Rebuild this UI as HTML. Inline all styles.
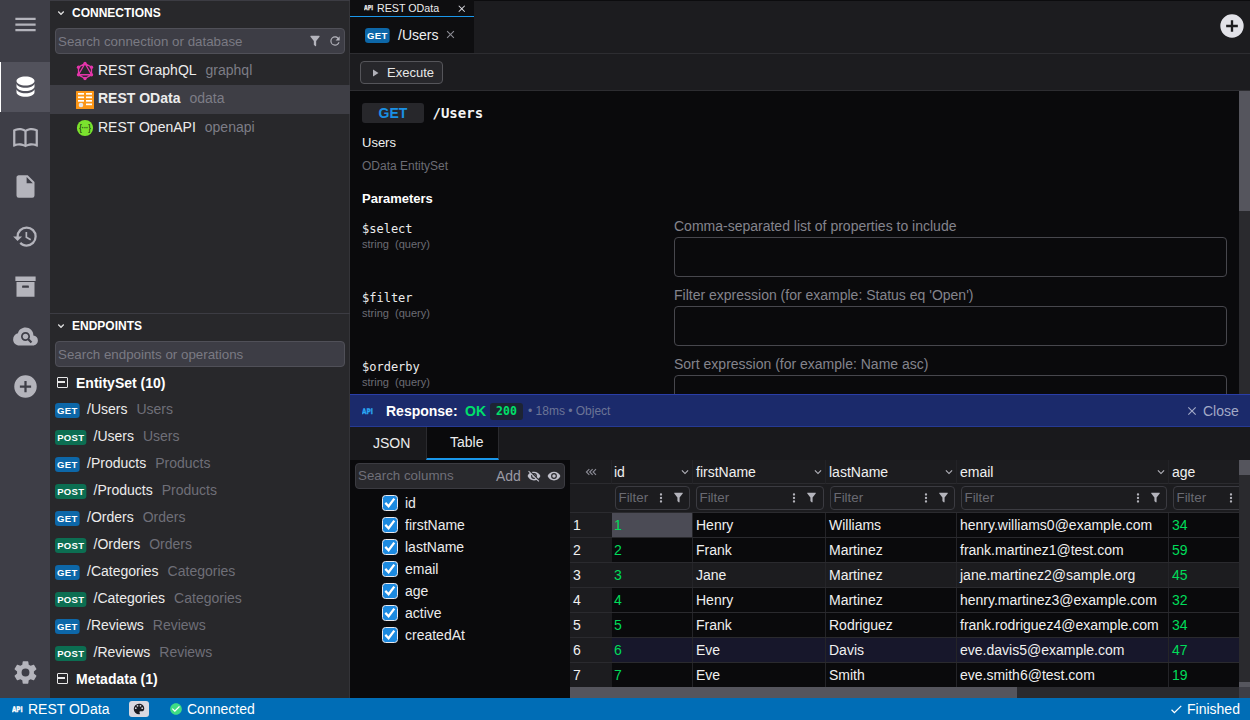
<!DOCTYPE html>
<html lang="en">
<head>
<meta charset="utf-8">
<title>REST OData</title>
<style>
*{box-sizing:border-box;margin:0;padding:0}
html,body{width:1250px;height:720px;overflow:hidden;background:#0a0a0c;color:#ececec;
  font-family:"Liberation Sans",Arial,sans-serif;font-size:14px}
.abs{position:absolute}
.mono{font-family:"DejaVu Sans Mono","Liberation Mono",monospace}
svg{display:block}
/* icon bar */
#iconbar{position:absolute;left:0;top:0;width:50px;height:698px;background:#3e3e47}
#iconbar .act{position:absolute;left:0;top:62px;width:50px;height:50px;background:#52525c;border-left:1.5px solid #fff}
#iconbar svg{position:absolute;left:11.5px;width:27px;height:27px;margin-top:.5px;fill:#b4b4bc}
/* side panel */
#side{position:absolute;left:50px;top:0;width:300px;height:698px;background:#28282b;border-right:1px solid #343438}
.shead{position:absolute;left:0;width:300px;height:25px;font-weight:bold;font-size:12px;color:#fff;line-height:25px;padding-left:22px;border-top:1px solid #3c3c43}
.shead svg{position:absolute;left:5px;top:6px;width:12px;height:12px;fill:#e6e6e6;stroke:#e6e6e6;stroke-width:.8}
.search{position:absolute;left:5px;width:290px;height:26px;background:#3d3d45;border:1px solid #505058;border-radius:4px;
  color:#7a7a83;font-size:13.33px;line-height:25px;padding-left:2px}
.search svg{position:absolute;top:4.5px;width:14px;height:14px;fill:#b4b4bc}
.crow{position:absolute;left:0;width:300px;height:28px;line-height:28px;font-size:14px;color:#ececec;padding-left:48px;white-space:nowrap}
.crow .sub{color:#7d7d86;margin-left:9px}
.crow svg{position:absolute;left:26px;top:5px;width:18px;height:18px}
.erow{position:absolute;left:0;width:300px;height:27px;line-height:29px;font-size:14px;color:#ececec;white-space:nowrap}
.erow .sub{color:#6f6f78;margin-left:9px}
.bdg{position:absolute;left:5px;top:8px;height:15px;border-radius:3px;color:#fff;font:bold 8.5px/17px "Liberation Sans",sans-serif;letter-spacing:.3px;padding-left:.3px;transform:scaleX(1.12);transform-origin:0 0;text-align:center;overflow:hidden}
.bdg.get{width:21.8px;background:#0d67a8}
.bdg.post{width:27.9px;background:#0c6e52}
.erow.g{padding-left:37px}
.erow.p{padding-left:43.5px}
.grp{position:absolute;left:0;width:300px;height:27px;line-height:29px;font-weight:bold;font-size:14px;color:#fff;padding-left:26px}
.grp i{position:absolute;left:6.5px;top:8px;width:11px;height:11px;border:1.5px solid #e8e8e8;border-radius:1px}
.grp i:after{content:"";position:absolute;left:.5px;top:3.2px;width:7px;height:1.6px;background:#e8e8e8}
/* status */
#status{position:absolute;left:0;top:698px;width:1250px;height:22px;background:#006db6;color:#fff;font-size:14px;line-height:22px}
/* main */
#main{position:absolute;left:350px;top:0;width:900px;height:698px;background:#0a0a0c;overflow:hidden}
</style>
</head>
<body>
<div id="iconbar">
  <div class="act"></div>
  <svg style="top:10px" viewBox="0 0 24 24"><path d="M3,6H21V8H3V6M3,11H21V13H3V11M3,16H21V18H3V16Z"/></svg>
  <svg style="top:72px;fill:#fff" viewBox="0 0 24 24"><path d="M12,3C7.58,3 4,4.79 4,7C4,9.21 7.58,11 12,11C16.42,11 20,9.21 20,7C20,4.79 16.42,3 12,3M4,9V12C4,14.21 7.58,16 12,16C16.42,16 20,14.21 20,12V9C20,11.21 16.42,13 12,13C7.58,13 4,11.21 4,9M4,14V17C4,19.21 7.58,21 12,21C16.42,21 20,19.21 20,17V14C20,16.21 16.42,18 12,18C7.58,18 4,16.21 4,14Z"/></svg>
  <svg style="top:122px" viewBox="0 0 24 24"><path fill-rule="evenodd" d="M12,21.5C10.65,20.65 8.2,20 6.5,20C4.85,20 3.15,20.3 1.75,21.05C1.65,21.1 1.6,21.1 1.5,21.1C1.25,21.1 1,20.85 1,20.6V6C1.6,5.55 2.25,5.25 3,5C4.11,4.65 5.33,4.5 6.5,4.5C8.45,4.5 10.55,4.9 12,6C13.45,4.9 15.55,4.5 17.5,4.5C18.67,4.5 19.89,4.65 21,5C21.75,5.25 22.4,5.55 23,6V20.6C23,20.85 22.75,21.1 22.5,21.1C22.4,21.1 22.35,21.1 22.25,21.05C20.85,20.3 19.15,20 17.5,20C15.8,20 13.35,20.65 12,21.5ZM13,19V7.5C14.3,6.9 15.9,6.5 17.5,6.5C18.7,6.5 19.9,6.65 21,7V18.5C19.9,18.15 18.7,18 17.5,18C15.9,18 14.3,18.4 13,19ZM11,19V7.5C9.7,6.9 8.1,6.5 6.5,6.5C5.3,6.5 4.1,6.65 3,7V18.5C4.1,18.15 5.3,18 6.5,18C8.1,18 9.7,18.4 11,19Z"/></svg>
  <svg style="top:172px" viewBox="0 0 24 24"><path d="M13,9V3.5L18.5,9M6,2C4.89,2 4,2.89 4,4V20A2,2 0 0,0 6,22H18A2,2 0 0,0 20,20V8L14,2H6Z"/></svg>
  <svg style="top:222px" viewBox="0 0 24 24"><path d="M13.5,8H12V13L16.28,15.54L17,14.33L13.5,12.25V8M13,3A9,9 0 0,0 4,12H1L4.96,16.03L9,12H6A7,7 0 0,1 13,5A7,7 0 0,1 20,12A7,7 0 0,1 13,19C11.07,19 9.32,18.21 8.06,16.94L6.64,18.36C8.27,20 10.5,21 13,21A9,9 0 0,0 22,12A9,9 0 0,0 13,3"/></svg>
  <svg style="top:272px" viewBox="0 0 24 24"><path d="M3,3H21V7H3V3M4,8H20V21H4V8M9.5,11A0.5,0.5 0 0,0 9,11.5V13H15V11.5A0.5,0.5 0 0,0 14.5,11H9.5Z"/></svg>
  <svg style="top:322px" viewBox="0 0 24 24"><path d="M21.86 12.5C21.1 11.63 20.15 11.13 19 11C19 9.05 18.32 7.4 16.96 6.04C15.6 4.68 13.95 4 12 4C10.42 4 9 4.47 7.75 5.43S5.67 7.62 5.25 9.15C4 9.43 2.96 10.08 2.17 11.1S1 13.28 1 14.58C1 16.09 1.54 17.38 2.61 18.43C3.69 19.5 5 20 6.5 20H18.5C19.75 20 20.81 19.56 21.69 18.69C22.56 17.81 23 16.75 23 15.5C23 14.35 22.62 13.35 21.86 12.5M16.57 18L14 15.43C13.43 15.79 12.74 16 12 16C9.79 16 8 14.21 8 12S9.79 8 12 8 16 9.79 16 12C16 12.74 15.79 13.43 15.43 14L18 16.57L16.57 18M14.5 12C14.5 13.38 13.38 14.5 12 14.5S9.5 13.38 9.5 12 10.62 9.5 12 9.5 14.5 10.62 14.5 12Z"/></svg>
  <svg style="top:372px" viewBox="0 0 24 24"><path d="M17,13H13V17H11V13H7V11H11V7H13V11H17M12,2A10,10 0 0,0 2,12A10,10 0 0,0 12,22A10,10 0 0,0 22,12A10,10 0 0,0 12,2Z"/></svg>
  <svg style="top:658px" viewBox="0 0 24 24"><path d="M12,15.5A3.5,3.5 0 0,1 8.5,12A3.5,3.5 0 0,1 12,8.5A3.5,3.5 0 0,1 15.5,12A3.5,3.5 0 0,1 12,15.5M19.43,12.97C19.47,12.65 19.5,12.33 19.5,12C19.5,11.67 19.47,11.34 19.43,11L21.54,9.37C21.73,9.22 21.78,8.95 21.66,8.73L19.66,5.27C19.54,5.05 19.27,4.96 19.05,5.05L16.56,6.05C16.04,5.66 15.5,5.32 14.87,5.07L14.5,2.42C14.46,2.18 14.25,2 14,2H10C9.75,2 9.54,2.18 9.5,2.42L9.13,5.07C8.5,5.32 7.96,5.66 7.44,6.05L4.95,5.05C4.73,4.96 4.46,5.05 4.34,5.27L2.34,8.73C2.21,8.95 2.27,9.22 2.46,9.37L4.57,11C4.53,11.34 4.5,11.67 4.5,12C4.5,12.33 4.53,12.65 4.57,12.97L2.46,14.63C2.27,14.78 2.21,15.05 2.34,15.27L4.34,18.73C4.46,18.95 4.73,19.03 4.95,18.95L7.44,17.94C7.96,18.34 8.5,18.68 9.13,18.93L9.5,21.58C9.54,21.82 9.75,22 10,22H14C14.25,22 14.46,21.82 14.5,21.58L14.87,18.93C15.5,18.67 16.04,18.34 16.56,17.94L19.05,18.95C19.27,19.03 19.54,18.95 19.66,18.73L21.66,15.27C21.78,15.05 21.73,14.78 21.54,14.63L19.43,12.97Z"/></svg>
</div>
<div id="side">
  <div class="shead" style="top:0"><svg viewBox="0 0 24 24"><path d="M7.41,8.58L12,13.17L16.59,8.58L18,10L12,16L6,10L7.41,8.58Z"/></svg>CONNECTIONS</div>
  <div class="search" style="top:28px">Search connection or database
    <svg style="left:251.5px" viewBox="0 0 24 24"><path d="M14,12V19.88C14.04,20.18 13.94,20.5 13.71,20.71C13.32,21.1 12.69,21.1 12.3,20.71L10.29,18.7C10.06,18.47 9.96,18.16 10,17.87V12H9.97L4.21,4.62C3.87,4.19 3.95,3.56 4.38,3.22C4.57,3.08 4.78,3 5,3V3H19V3C19.22,3 19.43,3.08 19.62,3.22C20.05,3.56 20.13,4.19 19.79,4.62L14.03,12H14Z"/></svg>
    <svg style="left:271.5px" viewBox="0 0 24 24"><path d="M17.65,6.35C16.2,4.9 14.21,4 12,4A8,8 0 0,0 4,12A8,8 0 0,0 12,20C15.73,20 18.84,17.45 19.73,14H17.65C16.83,16.33 14.61,18 12,18A6,6 0 0,1 6,12A6,6 0 0,1 12,6C13.66,6 15.14,6.69 16.22,7.78L13,11H20V4L17.65,6.35Z"/></svg>
  </div>
  <div class="crow" style="top:56px">
    <svg viewBox="0 0 24 24" style="left:24.8px;top:5px;width:20px;height:20px" fill="none" stroke="#e535ab" stroke-width="1.6"><path d="M12 3 L19.8 7.5 V16.5 L12 21 L4.2 16.5 V7.5 Z M12 3 L4.2 16.5 H19.8 Z"/><g fill="#e535ab" stroke="none"><circle cx="12" cy="3" r="2"/><circle cx="19.8" cy="7.5" r="2"/><circle cx="19.8" cy="16.5" r="2"/><circle cx="12" cy="21" r="2"/><circle cx="4.2" cy="16.5" r="2"/><circle cx="4.2" cy="7.5" r="2"/></g></svg>
    REST GraphQL<span class="sub">graphql</span></div>
  <div class="crow" style="top:85px;height:29px;background:#3e3e45;font-weight:bold;line-height:27px">
    <svg viewBox="0 0 18 18" style="top:6px"><rect width="18" height="18" rx="0.5" fill="#fb9617"/><g fill="#fff"><rect x="2" y="2" width="6" height="1.7"/><rect x="10" y="2" width="6" height="1.7"/><rect x="2" y="5.5" width="6" height="1.7"/><rect x="10" y="5.5" width="6" height="1.7"/><rect x="2" y="9" width="6" height="1.7"/><rect x="10" y="9" width="6" height="1.7"/><rect x="10" y="12.5" width="6" height="1.7"/></g><circle cx="5" cy="14" r="2.3" fill="#e6e6ea"/></svg>
    REST OData<span class="sub" style="font-weight:normal">odata</span></div>
  <div class="crow" style="top:113px;height:29px;line-height:29px">
    <svg viewBox="0 0 18 18" style="top:6px"><circle cx="9" cy="9" r="8.1" fill="#7be22e"/><text x="9" y="12" text-anchor="middle" font-family="Liberation Sans" font-weight="bold" font-size="9.5" textLength="11.5" lengthAdjust="spacingAndGlyphs" fill="#1c4010">{···}</text></svg>
    REST OpenAPI<span class="sub">openapi</span></div>
  <div class="shead" style="top:313px"><svg viewBox="0 0 24 24"><path d="M7.41,8.58L12,13.17L16.59,8.58L18,10L12,16L6,10L7.41,8.58Z"/></svg>ENDPOINTS</div>
  <div class="search" style="top:341px;line-height:26px">Search endpoints or operations</div>
  <div class="grp" style="top:369px"><i></i>EntitySet (10)</div>
  <div class="erow g" style="top:395px"><span class="bdg get">GET</span>/Users<span class="sub">Users</span></div>
  <div class="erow p" style="top:422px"><span class="bdg post">POST</span>/Users<span class="sub">Users</span></div>
  <div class="erow g" style="top:449px"><span class="bdg get">GET</span>/Products<span class="sub">Products</span></div>
  <div class="erow p" style="top:476px"><span class="bdg post">POST</span>/Products<span class="sub">Products</span></div>
  <div class="erow g" style="top:503px"><span class="bdg get">GET</span>/Orders<span class="sub">Orders</span></div>
  <div class="erow p" style="top:530px"><span class="bdg post">POST</span>/Orders<span class="sub">Orders</span></div>
  <div class="erow g" style="top:557px"><span class="bdg get">GET</span>/Categories<span class="sub">Categories</span></div>
  <div class="erow p" style="top:584px"><span class="bdg post">POST</span>/Categories<span class="sub">Categories</span></div>
  <div class="erow g" style="top:611px"><span class="bdg get">GET</span>/Reviews<span class="sub">Reviews</span></div>
  <div class="erow p" style="top:638px"><span class="bdg post">POST</span>/Reviews<span class="sub">Reviews</span></div>
  <div class="grp" style="top:665px"><i></i>Metadata (1)</div>
</div>
<style>
#tab1{position:absolute;left:0;top:0;width:900px;height:17px;background:#1c1c1f}
#tab1 .t{position:absolute;left:0;top:0;width:124px;height:17px;background:#0e0e10;border-bottom:1.5px solid #1a97ea;font-size:10.7px;line-height:15px;color:#ececec}
#tab2{position:absolute;left:0;top:17px;width:900px;height:36px;background:#1c1c1f}
#tab2 .t{position:absolute;left:0;top:0;width:124px;height:36px;background:#0e0e10}
.hl{position:absolute;left:0;width:900px;height:1px;background:#2d2d31}
#tool{position:absolute;left:0;top:54px;width:900px;height:36px;background:#1c1c1f}
#exec{position:absolute;left:10px;top:7px;width:83px;height:23px;background:#27272b;border:1px solid #55555a;border-radius:4px;font-size:13px;line-height:21px;color:#e6e6e6;padding-left:26px}
#content{position:absolute;left:0;top:91px;width:889px;height:303px;background:#0a0a0c;overflow:hidden}
.pname{position:absolute;left:12px;font:12px/14px "DejaVu Sans Mono",monospace;color:#ececec}
.ptype{position:absolute;left:12px;font-size:11px;line-height:13px;color:#6c6c74;white-space:pre}
.pdesc{position:absolute;left:324px;font-size:14px;line-height:16px;color:#84848c;white-space:nowrap}
.pbox{position:absolute;left:324px;width:553px;height:40px;border:1px solid #47474d;border-radius:4px}
.vsb{position:absolute;background:#2a2a2e}
.vsb i{position:absolute;left:0;top:0;width:100%;background:#55555d}
#resp{position:absolute;left:0;top:394px;width:900px;height:33px;background:#1b2a6b;border-top:1px solid #2a3ea8;border-bottom:1px solid #263a94}
#rtabs{position:absolute;left:0;top:427px;width:900px;height:33px;background:#19191c}
#rtabs .t{position:absolute;top:0;height:33px;font-size:14px;color:#ececec;text-align:center}
#cols{position:absolute;left:0;top:460px;width:220px;height:238px;background:#0a0a0c}
#cols .sb{position:absolute;left:5px;top:3px;width:210px;height:26px;background:#29292d;border:1px solid #3b3b41;border-radius:4px;font-size:13.33px;line-height:24px;color:#6f6f78;padding-left:2px}
.ck{position:absolute;left:32px;width:16px;height:16px;border-radius:3.5px;background:#1c8ae0;border:1px solid #e8e8ee}
.ck svg{position:absolute;left:-1px;top:-1px;width:16px;height:16px;fill:none;stroke:#fff;stroke-width:2.3}
.cl{position:absolute;left:55px;font-size:14px;line-height:22px;color:#ececec}
#grid{position:absolute;left:220px;top:460px;width:669px;height:228px;background:#0a0a0c;overflow:hidden}
.gh{position:absolute;top:0;height:24px;background:#1c1c1f;font-size:14px;line-height:24px;color:#f0f0f0;padding-left:3px;border-right:1px solid #232327;border-bottom:1px solid #2b2b2f}
.gh svg{position:absolute;right:0;top:5px;width:14px;height:14px;fill:#b0b0b8}
.gf{position:absolute;top:24px;height:29px;background:#1c1c1f;border-bottom:1px solid #2b2b2f}
.fi{position:absolute;top:2px;height:24px;background:#1c1c1f;border:1px solid #3b3b41;border-radius:4px;font-size:13.33px;line-height:22px;color:#6a6a72;padding-left:2.5px}
.fi svg{position:absolute;fill:#b4b4bc}
.gr{position:absolute;left:0;width:760px;height:25px;border-bottom:1px solid #2a2a2e;font-size:14px;line-height:24px;color:#f0f0f0;white-space:nowrap}
.gr span{position:absolute;top:0;height:24px;padding-left:3px;border-right:1px solid #242428}
.gr .n{left:0;width:42px;background:#1c1c1f;border-right:none}
.gr .c1{left:42px;width:81px;color:#00dc5a;padding-left:2px}
.gr .c2{left:123px;width:133px}
.gr .c3{left:256px;width:131px}
.gr .c4{left:387px;width:212px}
.gr .c5{left:599px;width:100px;color:#00dc5a;border-right:none}
</style>
<div id="main">
  <div id="tab1"><div class="abs" style="left:124px;top:0;width:776px;height:1px;background:#0c0c0e"></div><div class="t">
    <svg class="abs" style="left:14px;top:3.4px" width="12" height="8" viewBox="0 0 12 8"><text x="0" y="7" font-family="DejaVu Sans" font-weight="bold" font-size="6.8" textLength="9" lengthAdjust="spacingAndGlyphs" fill="#e6e6e6" stroke="#e6e6e6" stroke-width=".3">API</text></svg>
    <span class="abs" style="left:27px;top:1px">REST OData</span>
    <svg class="abs" style="left:105.7px;top:2.5px;fill:#d8d8de" width="11.5" height="11.5" viewBox="0 0 24 24"><path d="M19,6.41L17.59,5L12,10.59L6.41,5L5,6.41L10.59,12L5,17.59L6.41,19L12,13.41L17.59,19L19,17.59L13.41,12L19,6.41Z"/></svg>
  </div></div>
  <div id="tab2"><div class="t">
    <span class="bdg get" style="left:15px;top:11px;height:15px;line-height:16px">GET</span>
    <span class="abs" style="left:48px;top:10px;font-size:14px;line-height:16px;color:#f0f0f0">/Users</span>
    <svg class="abs" style="left:94px;top:11px;fill:#8c8c94" width="13" height="13" viewBox="0 0 24 24"><path d="M19,6.41L17.59,5L12,10.59L6.41,5L5,6.41L10.59,12L5,17.59L6.41,19L12,13.41L17.59,19L19,17.59L13.41,12L19,6.41Z"/></svg>
  </div>
    <svg class="abs" style="left:868px;top:-5px;fill:#e2e2e8" width="28" height="28" viewBox="0 0 24 24"><path d="M17,13H13V17H11V13H7V11H11V7H13V11H17M12,2A10,10 0 0,0 2,12A10,10 0 0,0 12,22A10,10 0 0,0 22,12A10,10 0 0,0 12,2Z"/></svg>
  </div>
  <div class="hl" style="top:53px"></div>
  <div id="tool"><div id="exec"><svg class="abs" style="left:8px;top:4.5px;fill:#b0b0b8" width="12" height="12" viewBox="0 0 24 24"><path d="M8,5.14V19.14L19,12.14L8,5.14Z"/></svg>Execute</div></div>
  <div class="hl" style="top:90px"></div>
  <div id="content">
    <div class="abs" style="left:12px;top:12px;width:62px;height:20px;background:#27272b;border-radius:3px;color:#1a90e4;font-weight:bold;font-size:14px;line-height:20px;text-align:center">GET</div>
    <div class="abs mono" style="left:82.5px;top:13px;font-weight:bold;font-size:14px;line-height:18px;color:#f4f4f4">/Users</div>
    <div class="abs" style="left:12px;top:44px;font-size:13px;line-height:15px;color:#f0f0f0">Users</div>
    <div class="abs" style="left:12px;top:68px;font-size:12px;line-height:14px;color:#6c6c74">OData EntitySet</div>
    <div class="abs" style="left:12px;top:100px;font-size:13px;line-height:15px;font-weight:bold;color:#fff">Parameters</div>
    <div class="pname" style="top:131px">$select</div><div class="ptype" style="top:147px">string  (query)</div>
    <div class="pdesc" style="top:127px">Comma-separated list of properties to include</div><div class="pbox" style="top:146px"></div>
    <div class="pname" style="top:200px">$filter</div><div class="ptype" style="top:216px">string  (query)</div>
    <div class="pdesc" style="top:196px">Filter expression (for example: Status eq 'Open')</div><div class="pbox" style="top:215px"></div>
    <div class="pname" style="top:269px">$orderby</div><div class="ptype" style="top:285px">string  (query)</div>
    <div class="pdesc" style="top:265px">Sort expression (for example: Name asc)</div><div class="pbox" style="top:284px"></div>
  </div>
  <div class="vsb" style="left:889px;top:91px;width:11px;height:303px"><i style="height:120px"></i></div>
  <div id="resp">
    <svg class="abs" style="left:11.5px;top:11.8px" width="12" height="8" viewBox="0 0 12 8"><text x="0" y="7" font-family="DejaVu Sans" font-weight="bold" font-size="7.6" textLength="10.8" lengthAdjust="spacingAndGlyphs" fill="#2aa8f5" stroke="#2aa8f5" stroke-width=".35">API</text></svg>
    <span class="abs" style="left:36px;top:7px;font-weight:bold;font-size:14px;line-height:18px;color:#fff">Response:</span>
    <span class="abs" style="left:115px;top:7px;font-weight:bold;font-size:14px;line-height:18px;color:#00e06a">OK</span>
    <span class="abs mono" style="left:140px;top:8px;width:33px;height:17px;background:#1d2433;border-radius:3px;font-weight:bold;font-size:11.5px;line-height:17px;color:#00e06a;text-align:center">200</span>
    <span class="abs" style="left:178px;top:9px;font-size:12px;line-height:14px;color:#6b7496">• 18ms • Object</span>
    <svg class="abs" style="left:835px;top:9px;fill:#a2a9c6" width="14" height="14" viewBox="0 0 24 24"><path d="M19,6.41L17.59,5L12,10.59L6.41,5L5,6.41L10.59,12L5,17.59L6.41,19L12,13.41L17.59,19L19,17.59L13.41,12L19,6.41Z"/></svg>
    <span class="abs" style="left:853px;top:7px;font-size:14px;line-height:18px;color:#a2a9c6">Close</span>
  </div>
  <div id="rtabs">
    <div class="t" style="left:0;width:76px;line-height:33px;text-align:left;padding-left:23px">JSON</div>
    <div class="t" style="left:76px;width:73px;background:#0a0a0c;border-bottom:2px solid #1a97ea;border-left:1px solid #2a2a2e;border-right:1px solid #2a2a2e;line-height:30px;text-align:left;padding-left:23px">Table</div>
  </div>
  <div id="cols">
    <div class="sb">Search columns
      <span class="abs" style="left:140px;top:0;font-size:14px;color:#9a9aa4">Add</span>
      <svg class="abs" style="left:171.3px;top:4.5px;fill:#c0c0ca" width="14" height="14" viewBox="0 0 24 24"><path d="M11.83,9L15,12.16C15,12.11 15,12.05 15,12A3,3 0 0,0 12,9C11.94,9 11.89,9 11.83,9M7.53,9.8L9.08,11.35C9.03,11.56 9,11.77 9,12A3,3 0 0,0 12,15C12.22,15 12.44,14.97 12.65,14.92L14.2,16.47C13.53,16.8 12.79,17 12,17A5,5 0 0,1 7,12C7,11.21 7.2,10.47 7.53,9.8M2,4.27L4.28,6.55L4.73,7C3.08,8.3 1.78,10 1,12C2.73,16.39 7,19.5 12,19.5C13.55,19.5 15.03,19.2 16.38,18.66L16.81,19.08L19.73,22L21,20.73L3.27,3M12,7A5,5 0 0,1 17,12C17,12.64 16.87,13.26 16.64,13.82L19.57,16.75C21.07,15.5 22.27,13.86 23,12C21.27,7.61 17,4.5 12,4.5C10.6,4.5 9.26,4.75 8,5.2L10.17,7.35C10.74,7.13 11.35,7 12,7Z"/></svg>
      <svg class="abs" style="left:191px;top:4.7px;fill:#c0c0ca" width="14" height="14" viewBox="0 0 24 24"><path d="M12,9A3,3 0 0,0 9,12A3,3 0 0,0 12,15A3,3 0 0,0 15,12A3,3 0 0,0 12,9M12,17A5,5 0 0,1 7,12A5,5 0 0,1 12,7A5,5 0 0,1 17,12A5,5 0 0,1 12,17M12,4.5C7,4.5 2.73,7.61 1,12C2.73,16.39 7,19.5 12,19.5C17,19.5 21.27,16.39 23,12C21.27,7.61 17,4.5 12,4.5Z"/></svg>
    </div>
    <div class="ck" style="top:35px"><svg viewBox="0 0 16 16"><path d="M3.3 7.9 L6.6 11.2 L12.3 3.6"/></svg></div><div class="cl" style="top:32px">id</div>
<div class="ck" style="top:57px"><svg viewBox="0 0 16 16"><path d="M3.3 7.9 L6.6 11.2 L12.3 3.6"/></svg></div><div class="cl" style="top:54px">firstName</div>
<div class="ck" style="top:79px"><svg viewBox="0 0 16 16"><path d="M3.3 7.9 L6.6 11.2 L12.3 3.6"/></svg></div><div class="cl" style="top:76px">lastName</div>
<div class="ck" style="top:101px"><svg viewBox="0 0 16 16"><path d="M3.3 7.9 L6.6 11.2 L12.3 3.6"/></svg></div><div class="cl" style="top:98px">email</div>
<div class="ck" style="top:123px"><svg viewBox="0 0 16 16"><path d="M3.3 7.9 L6.6 11.2 L12.3 3.6"/></svg></div><div class="cl" style="top:120px">age</div>
<div class="ck" style="top:145px"><svg viewBox="0 0 16 16"><path d="M3.3 7.9 L6.6 11.2 L12.3 3.6"/></svg></div><div class="cl" style="top:142px">active</div>
<div class="ck" style="top:167px"><svg viewBox="0 0 16 16"><path d="M3.3 7.9 L6.6 11.2 L12.3 3.6"/></svg></div><div class="cl" style="top:164px">createdAt</div>

  </div>
  <div id="grid">
    <div class="gh" style="left:0;width:42px"><svg style="left:15px;top:7px;right:auto;width:12px;height:10px;fill:none;stroke:#8a8a94;stroke-width:1.4" viewBox="0 0 14 12"><path d="M5 2.5 L1.5 6 L5 9.5 M9 2.5 L5.5 6 L9 9.5 M13 2.5 L9.5 6 L13 9.5"/></svg></div>
<div class="gf" style="left:0;width:42px"></div>
<div class="gh" style="left:42px;width:81px"><span style="margin-left:-1px">id</span><svg viewBox="0 0 24 24"><path d="M7.41,8.58L12,13.17L16.59,8.58L18,10L12,16L6,10L7.41,8.58Z"/></svg></div>
<div class="gf" style="left:42px;width:81px"><div class="fi" style="left:3px;width:75px">Filter<svg style="left:38px;top:4px" width="14" height="14" viewBox="0 0 24 24"><path d="M12,16A2,2 0 0,1 14,18A2,2 0 0,1 12,20A2,2 0 0,1 10,18A2,2 0 0,1 12,16M12,10A2,2 0 0,1 14,12A2,2 0 0,1 12,14A2,2 0 0,1 10,12A2,2 0 0,1 12,10M12,4A2,2 0 0,1 14,6A2,2 0 0,1 12,8A2,2 0 0,1 10,6A2,2 0 0,1 12,4Z"/></svg><svg style="left:56px;top:4px" width="13" height="13" viewBox="0 0 24 24"><path d="M14,12V19.88C14.04,20.18 13.94,20.5 13.71,20.71C13.32,21.1 12.69,21.1 12.3,20.71L10.29,18.7C10.06,18.47 9.96,18.16 10,17.87V12H9.97L4.21,4.62C3.87,4.19 3.95,3.56 4.38,3.22C4.57,3.08 4.78,3 5,3V3H19V3C19.22,3 19.43,3.08 19.62,3.22C20.05,3.56 20.13,4.19 19.79,4.62L14.03,12H14Z"/></svg></div></div>
<div class="gh" style="left:123px;width:133px">firstName<svg viewBox="0 0 24 24"><path d="M7.41,8.58L12,13.17L16.59,8.58L18,10L12,16L6,10L7.41,8.58Z"/></svg></div>
<div class="gf" style="left:123px;width:133px"><div class="fi" style="left:3px;width:128px">Filter<svg style="left:90px;top:4px" width="14" height="14" viewBox="0 0 24 24"><path d="M12,16A2,2 0 0,1 14,18A2,2 0 0,1 12,20A2,2 0 0,1 10,18A2,2 0 0,1 12,16M12,10A2,2 0 0,1 14,12A2,2 0 0,1 12,14A2,2 0 0,1 10,12A2,2 0 0,1 12,10M12,4A2,2 0 0,1 14,6A2,2 0 0,1 12,8A2,2 0 0,1 10,6A2,2 0 0,1 12,4Z"/></svg><svg style="left:108px;top:4px" width="13" height="13" viewBox="0 0 24 24"><path d="M14,12V19.88C14.04,20.18 13.94,20.5 13.71,20.71C13.32,21.1 12.69,21.1 12.3,20.71L10.29,18.7C10.06,18.47 9.96,18.16 10,17.87V12H9.97L4.21,4.62C3.87,4.19 3.95,3.56 4.38,3.22C4.57,3.08 4.78,3 5,3V3H19V3C19.22,3 19.43,3.08 19.62,3.22C20.05,3.56 20.13,4.19 19.79,4.62L14.03,12H14Z"/></svg></div></div>
<div class="gh" style="left:256px;width:131px">lastName<svg viewBox="0 0 24 24"><path d="M7.41,8.58L12,13.17L16.59,8.58L18,10L12,16L6,10L7.41,8.58Z"/></svg></div>
<div class="gf" style="left:256px;width:131px"><div class="fi" style="left:4px;width:125px">Filter<svg style="left:88px;top:4px" width="14" height="14" viewBox="0 0 24 24"><path d="M12,16A2,2 0 0,1 14,18A2,2 0 0,1 12,20A2,2 0 0,1 10,18A2,2 0 0,1 12,16M12,10A2,2 0 0,1 14,12A2,2 0 0,1 12,14A2,2 0 0,1 10,12A2,2 0 0,1 12,10M12,4A2,2 0 0,1 14,6A2,2 0 0,1 12,8A2,2 0 0,1 10,6A2,2 0 0,1 12,4Z"/></svg><svg style="left:106px;top:4px" width="13" height="13" viewBox="0 0 24 24"><path d="M14,12V19.88C14.04,20.18 13.94,20.5 13.71,20.71C13.32,21.1 12.69,21.1 12.3,20.71L10.29,18.7C10.06,18.47 9.96,18.16 10,17.87V12H9.97L4.21,4.62C3.87,4.19 3.95,3.56 4.38,3.22C4.57,3.08 4.78,3 5,3V3H19V3C19.22,3 19.43,3.08 19.62,3.22C20.05,3.56 20.13,4.19 19.79,4.62L14.03,12H14Z"/></svg></div></div>
<div class="gh" style="left:387px;width:212px">email<svg viewBox="0 0 24 24"><path d="M7.41,8.58L12,13.17L16.59,8.58L18,10L12,16L6,10L7.41,8.58Z"/></svg></div>
<div class="gf" style="left:387px;width:212px"><div class="fi" style="left:4px;width:206px">Filter<svg style="left:169px;top:4px" width="14" height="14" viewBox="0 0 24 24"><path d="M12,16A2,2 0 0,1 14,18A2,2 0 0,1 12,20A2,2 0 0,1 10,18A2,2 0 0,1 12,16M12,10A2,2 0 0,1 14,12A2,2 0 0,1 12,14A2,2 0 0,1 10,12A2,2 0 0,1 12,10M12,4A2,2 0 0,1 14,6A2,2 0 0,1 12,8A2,2 0 0,1 10,6A2,2 0 0,1 12,4Z"/></svg><svg style="left:187px;top:4px" width="13" height="13" viewBox="0 0 24 24"><path d="M14,12V19.88C14.04,20.18 13.94,20.5 13.71,20.71C13.32,21.1 12.69,21.1 12.3,20.71L10.29,18.7C10.06,18.47 9.96,18.16 10,17.87V12H9.97L4.21,4.62C3.87,4.19 3.95,3.56 4.38,3.22C4.57,3.08 4.78,3 5,3V3H19V3C19.22,3 19.43,3.08 19.62,3.22C20.05,3.56 20.13,4.19 19.79,4.62L14.03,12H14Z"/></svg></div></div>
<div class="gh" style="left:599px;width:93px">age</div>
<div class="gf" style="left:599px;width:93px"><div class="fi" style="left:4px;width:87px">Filter<svg style="left:50px;top:4px" width="14" height="14" viewBox="0 0 24 24"><path d="M12,16A2,2 0 0,1 14,18A2,2 0 0,1 12,20A2,2 0 0,1 10,18A2,2 0 0,1 12,16M12,10A2,2 0 0,1 14,12A2,2 0 0,1 12,14A2,2 0 0,1 10,12A2,2 0 0,1 12,10M12,4A2,2 0 0,1 14,6A2,2 0 0,1 12,8A2,2 0 0,1 10,6A2,2 0 0,1 12,4Z"/></svg><svg style="left:68px;top:4px" width="13" height="13" viewBox="0 0 24 24"><path d="M14,12V19.88C14.04,20.18 13.94,20.5 13.71,20.71C13.32,21.1 12.69,21.1 12.3,20.71L10.29,18.7C10.06,18.47 9.96,18.16 10,17.87V12H9.97L4.21,4.62C3.87,4.19 3.95,3.56 4.38,3.22C4.57,3.08 4.78,3 5,3V3H19V3C19.22,3 19.43,3.08 19.62,3.22C20.05,3.56 20.13,4.19 19.79,4.62L14.03,12H14Z"/></svg></div></div>
<div class="gr" style="top:53px;"><span class="n">1</span><span class="c1" style="background:#4b4b55">1</span><span class="c2">Henry</span><span class="c3">Williams</span><span class="c4">henry.williams0@example.com</span><span class="c5">34</span></div>
<div class="gr" style="top:78px;"><span class="n">2</span><span class="c1">2</span><span class="c2">Frank</span><span class="c3">Martinez</span><span class="c4">frank.martinez1@test.com</span><span class="c5">59</span></div>
<div class="gr" style="top:103px;background:#1c1c1f;"><span class="n">3</span><span class="c1">3</span><span class="c2">Jane</span><span class="c3">Martinez</span><span class="c4">jane.martinez2@sample.org</span><span class="c5">45</span></div>
<div class="gr" style="top:128px;"><span class="n">4</span><span class="c1">4</span><span class="c2">Henry</span><span class="c3">Martinez</span><span class="c4">henry.martinez3@example.com</span><span class="c5">32</span></div>
<div class="gr" style="top:153px;"><span class="n">5</span><span class="c1">5</span><span class="c2">Frank</span><span class="c3">Rodriguez</span><span class="c4">frank.rodriguez4@example.com</span><span class="c5">34</span></div>
<div class="gr" style="top:178px;background:#17172b;"><span class="n">6</span><span class="c1">6</span><span class="c2">Eve</span><span class="c3">Davis</span><span class="c4">eve.davis5@example.com</span><span class="c5">47</span></div>
<div class="gr" style="top:203px;"><span class="n">7</span><span class="c1">7</span><span class="c2">Eve</span><span class="c3">Smith</span><span class="c4">eve.smith6@test.com</span><span class="c5">19</span></div>

  </div>
  <div class="vsb" style="left:889px;top:460px;width:11px;height:228px"><i style="height:15px"></i><i style="top:222px;height:5px;background:#56565e"></i></div>
  <div class="vsb" style="left:220px;top:687px;width:669px;height:11px"><i style="height:11px;width:447px"></i></div>
  <div class="vsb" style="left:889px;top:687px;width:11px;height:11px;background:#3e3e46"></div>
</div>
<div id="status">
  <svg class="abs" style="left:11.8px;top:6.8px" width="12" height="8" viewBox="0 0 12 8"><text x="0" y="7" font-family="DejaVu Sans" font-weight="bold" font-size="7.8" textLength="10.6" lengthAdjust="spacingAndGlyphs" fill="#fff" stroke="#fff" stroke-width=".35">API</text></svg>
  <span class="abs" style="left:28px;top:0">REST OData</span>
  <span class="abs" style="left:129px;top:3px;width:20px;height:16px;background:#d9d9e1;border-radius:3px"></span>
  <svg class="abs" style="left:132px;top:4px;fill:#1c1c22" width="14" height="14" viewBox="0 0 24 24"><path d="M17.5,12A1.5,1.5 0 0,1 16,10.5A1.5,1.5 0 0,1 17.5,9A1.5,1.5 0 0,1 19,10.5A1.5,1.5 0 0,1 17.5,12M14.5,8A1.5,1.5 0 0,1 13,6.5A1.5,1.5 0 0,1 14.5,5A1.5,1.5 0 0,1 16,6.5A1.5,1.5 0 0,1 14.5,8M9.5,8A1.5,1.5 0 0,1 8,6.5A1.5,1.5 0 0,1 9.5,5A1.5,1.5 0 0,1 11,6.5A1.5,1.5 0 0,1 9.5,8M6.5,12A1.5,1.5 0 0,1 5,10.5A1.5,1.5 0 0,1 6.5,9A1.5,1.5 0 0,1 8,10.5A1.5,1.5 0 0,1 6.5,12M12,3A9,9 0 0,0 3,12A9,9 0 0,0 12,21A1.5,1.5 0 0,0 13.5,19.5C13.5,19.11 13.35,18.76 13.11,18.5C12.88,18.23 12.73,17.88 12.73,17.5A1.5,1.5 0 0,1 14.23,16H16A5,5 0 0,0 21,11C21,6.58 16.97,3 12,3Z"/></svg>
  <svg class="abs" style="left:169px;top:4px" width="14" height="14" viewBox="0 0 24 24"><circle cx="12" cy="12" r="8" fill="#fff"/><path fill="#3fdc84" d="M12 2C6.5 2 2 6.5 2 12S6.5 22 12 22 22 17.5 22 12 17.5 2 12 2M10 17L5 12L6.41 10.59L10 14.17L17.59 6.58L19 8L10 17Z"/></svg>
  <span class="abs" style="left:187px;top:0">Connected</span>
  <svg class="abs" style="left:1168.8px;top:3.7px;fill:#fff" width="14.5" height="14.5" viewBox="0 0 24 24"><path d="M21,7L9,19L3.5,13.5L4.91,12.09L9,16.17L19.59,5.59L21,7Z"/></svg>
  <span class="abs" style="left:1187px;top:0">Finished</span>
</div>
</body>
</html>
